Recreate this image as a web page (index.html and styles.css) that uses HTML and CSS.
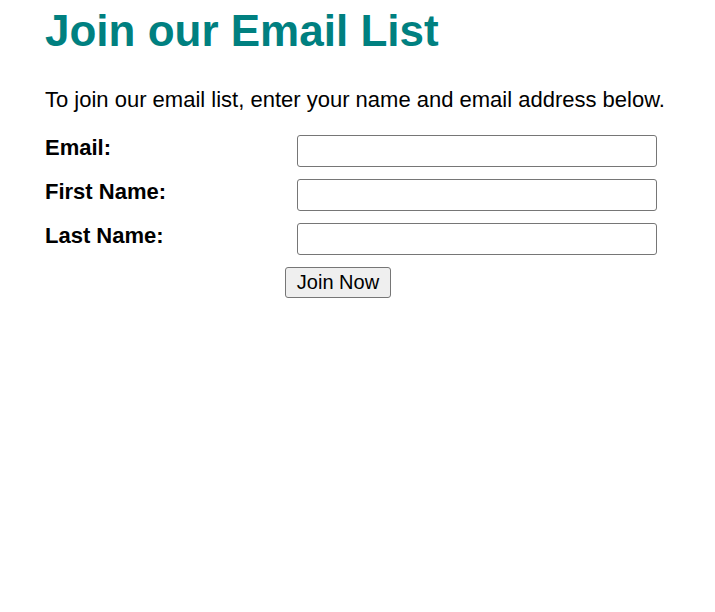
FILE: index.html
```html
<!DOCTYPE html>
<html>
<head>
<meta charset="utf-8">
<title>Join our Email List</title>
<link rel="stylesheet" href="styles.css">
</head>
<body>
<main class="page">
  <h1 class="title">Join our Email List</h1>
  <p class="intro">To join our email list, enter your name and email address below.</p>
  <form class="form">
    <label class="label" for="email">Email:</label>
    <input class="field" type="email" id="email">
    <label class="label" for="first">First Name:</label>
    <input class="field" type="text" id="first">
    <label class="label" for="last">Last Name:</label>
    <input class="field" type="text" id="last">
    <div class="actions"><button class="btn" type="button">Join Now</button></div>
  </form>
</main>
</body>
</html>
```
FILE: styles.css
```css
html, body {
  margin: 0;
  background: #fff;
}
body {
  font-family: "Liberation Sans", Arial, sans-serif;
  font-size: 22px;
  color: #000;
}
.page {
  padding: 6px 45px 0 45px;
}
.title {
  margin: 0;
  font-size: 44px;
  font-weight: bold;
  color: #008080;
  line-height: normal;
}
.intro {
  margin: 31px 0 0 0;
  line-height: normal;
}
.form {
  margin-top: 22px;
  display: grid;
  grid-template-columns: 240px 372px;
  row-gap: 12px;
  align-items: start;
}
.label {
  font-weight: bold;
  line-height: normal;
}
.field {
  margin: 0 0 0 12px;
  box-sizing: border-box;
  width: 360px;
  height: 32px;
  border: 1px solid #767676;
  border-radius: 3px;
  font-family: inherit;
  font-size: 20px;
  padding: 1px 4px;
  background: #fff;
}
.actions {
  grid-column: 1 / 3;
  padding-left: 240px;
}
.btn {
  box-sizing: border-box;
  width: 106px;
  height: 31px;
  font-family: inherit;
  font-size: 20px;
  padding: 0 6px;
  background: #efefef;
  border: 1px solid #767676;
  border-radius: 3px;
  color: #000;
}
```
